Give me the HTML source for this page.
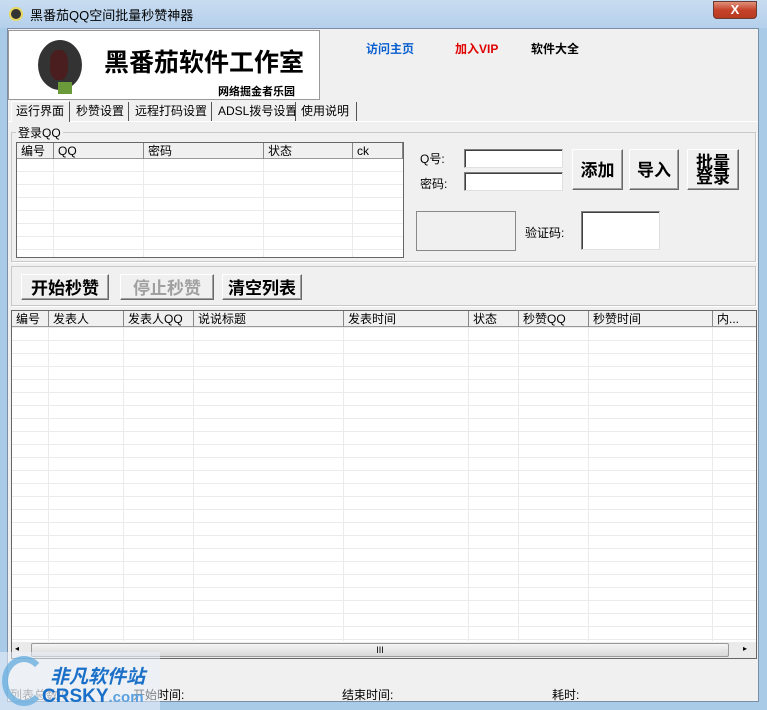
<!DOCTYPE html><html><head><meta charset="utf-8"><style>
*{margin:0;padding:0;box-sizing:border-box}
body{width:767px;height:710px;overflow:hidden;background:#a9cbe8;font-family:"Liberation Sans","Noto Sans CJK SC",sans-serif;font-size:12px;color:#000;position:relative}
.a{position:absolute}
.title{left:0;top:0;width:767px;height:28px;background:linear-gradient(#c8dcf0,#b5d0ec);}
.client{left:7px;top:28px;width:752px;height:674px;background:#f0f0f0;border:1px solid #7a8ea8}
.btn{position:absolute;background:#f0f0f0;border:1px solid;border-color:#fff #6a6a6a #6a6a6a #fff;box-shadow:inset -1px -1px 0 #a0a0a0;font-weight:bold;font-size:17px;text-align:center;font-family:"Noto Sans CJK SC",sans-serif}
.inp{position:absolute;background:#fff;border:1px solid;border-color:#808080 #e0e0e0 #e0e0e0 #808080;box-shadow:inset 1px 1px 0 #404040}
.hd{position:absolute;height:16px;background:#f0f0f0;border-bottom:1px solid #999;}
.hd span{position:absolute;top:0;height:16px;border-right:1px solid #888;padding-left:4px;line-height:16px;font-size:12px;white-space:nowrap;overflow:hidden}
.grid{background-color:#fff;background-image:repeating-linear-gradient(to bottom,transparent 0 12px,#ebebeb 12px 13px)}
.vl{position:absolute;width:1px;background:#ebebeb}
.tab{position:absolute;top:102px;height:19px;line-height:19px;font-size:12px;border-right:1px solid #555;padding-left:4px;white-space:nowrap;overflow:hidden}
</style></head><body>
<div class="a title"></div>
<div class="a" style="left:9px;top:7px;width:14px;height:14px;border-radius:50%;background:#333;border:2px solid #e8d860"></div>
<div class="a" style="left:30px;top:5px;font-size:13px">黑番茄QQ空间批量秒赞神器</div>
<div class="a" style="left:713px;top:1px;width:44px;height:18px;border-radius:0 0 4px 4px;background:linear-gradient(#e0907a,#c5432a 50%,#b83a22);border:1px solid #6b3a30;color:#fff;font-weight:bold;text-align:center;line-height:16px;font-size:13px">X</div>
<div class="a client"></div>
<div class="a" style="left:8px;top:30px;width:312px;height:70px;background:#fff;border:1px solid #999"></div>
<div class="a" style="left:38px;top:40px;width:44px;height:50px;border-radius:50%;background:#333"></div>
<div class="a" style="left:50px;top:50px;width:18px;height:30px;border-radius:40%;background:#4a1e1e"></div>
<div class="a" style="left:58px;top:82px;width:14px;height:12px;background:#6a9a3a"></div>
<div class="a" style="left:104px;top:44px;font-size:25px;font-weight:bold;font-family:'Noto Sans CJK SC',sans-serif;line-height:34px">黑番茄软件工作室</div>
<div class="a" style="left:218px;top:83px;font-size:11px;font-weight:bold">网络掘金者乐园</div>
<div class="a" style="left:366px;top:40px;color:#0a5fd0;font-weight:bold">访问主页</div>
<div class="a" style="left:455px;top:40px;color:#e00000;font-weight:bold">加入VIP</div>
<div class="a" style="left:531px;top:40px;font-weight:bold">软件大全</div>
<div class="a" style="left:8px;top:121px;width:750px;height:1px;background:#fff"></div>
<div class="tab" style="left:11px;top:101px;height:21px;width:59px;background:#f0f0f0;border-left:1px solid #fff;border-top:1px solid #fff">运行界面</div>
<div class="tab" style="left:72px;width:57px">秒赞设置</div>
<div class="tab" style="left:131px;width:81px">远程打码设置</div>
<div class="tab" style="left:214px;width:82px">ADSL拨号设置</div>
<div class="tab" style="left:297px;width:60px">使用说明</div>
<div class="a" style="left:11px;top:132px;width:745px;height:130px;border:1px solid #c8c8c8;box-shadow:1px 1px 0 #fff"></div>
<div class="a" style="left:16px;top:124px;background:#f0f0f0;padding:0 2px">登录QQ</div>
<div class="a grid" style="left:16px;top:142px;width:388px;height:116px;border:1px solid #666;background-position:0 3px"></div>
<div class="vl" style="left:53px;top:158px;height:99px"></div><div class="vl" style="left:143px;top:158px;height:99px"></div><div class="vl" style="left:263px;top:158px;height:99px"></div><div class="vl" style="left:352px;top:158px;height:99px"></div>
<div class="hd" style="left:17px;top:143px;width:386px"><span style="left:0;width:37px">编号</span><span style="left:37px;width:90px">QQ</span><span style="left:127px;width:120px">密码</span><span style="left:247px;width:89px">状态</span><span style="left:336px;width:50px">ck</span></div>
<div class="a" style="left:420px;top:150px">Q号:</div>
<div class="a" style="left:420px;top:175px">密码:</div>
<div class="inp" style="left:464px;top:149px;width:99px;height:19px"></div>
<div class="inp" style="left:464px;top:172px;width:99px;height:19px"></div>
<div class="btn" style="left:572px;top:149px;width:51px;height:41px;line-height:38px">添加</div>
<div class="btn" style="left:629px;top:149px;width:50px;height:41px;line-height:38px">导入</div>
<div class="btn" style="left:687px;top:149px;width:52px;height:41px;line-height:15px;padding-top:3px">批量<br>登录</div>
<div class="a" style="left:416px;top:211px;width:100px;height:40px;border:1px solid #888"></div>
<div class="a" style="left:525px;top:224px">验证码:</div>
<div class="inp" style="left:581px;top:211px;width:79px;height:39px"></div>
<div class="a" style="left:11px;top:266px;width:745px;height:40px;border:1px solid #c8c8c8;box-shadow:1px 1px 0 #fff"></div>
<div class="btn" style="left:21px;top:274px;width:88px;height:26px;line-height:24px">开始秒赞</div>
<div class="btn" style="left:120px;top:274px;width:94px;height:26px;line-height:24px;color:#a0a0a0">停止秒赞</div>
<div class="btn" style="left:222px;top:274px;width:80px;height:26px;line-height:24px">清空列表</div>
<div class="a grid" style="left:11px;top:310px;width:746px;height:349px;border:1px solid #666;background-position:0 4px"></div>
<div class="vl" style="left:48px;top:327px;height:314px"></div><div class="vl" style="left:123px;top:327px;height:314px"></div><div class="vl" style="left:193px;top:327px;height:314px"></div><div class="vl" style="left:343px;top:327px;height:314px"></div><div class="vl" style="left:468px;top:327px;height:314px"></div><div class="vl" style="left:518px;top:327px;height:314px"></div><div class="vl" style="left:588px;top:327px;height:314px"></div><div class="vl" style="left:712px;top:327px;height:314px"></div>
<div class="hd" style="left:12px;top:311px;width:744px"><span style="left:0;width:37px">编号</span><span style="left:37px;width:75px">发表人</span><span style="left:112px;width:70px">发表人QQ</span><span style="left:182px;width:150px">说说标题</span><span style="left:332px;width:125px">发表时间</span><span style="left:457px;width:50px">状态</span><span style="left:507px;width:70px">秒赞QQ</span><span style="left:577px;width:124px">秒赞时间</span><span style="left:701px;width:43px;border:none">内...</span></div>
<div class="a" style="left:12px;top:642px;width:744px;height:16px;background:#eaeaea"></div>
<div class="a" style="left:31px;top:643px;width:698px;height:14px;border:1px solid #999;border-radius:2px;background:linear-gradient(#f4f4f4,#d8d8d8);text-align:center;font-size:9px;line-height:12px">III</div>
<div class="a" style="left:15px;top:644px;font-size:8px">◂</div><div class="a" style="left:743px;top:644px;font-size:8px">▸</div>
<div class="a" style="left:10px;top:686px;color:#666">列表总数:0</div>
<div class="a" style="left:133px;top:686px">开始时间:</div>
<div class="a" style="left:342px;top:686px">结束时间:</div>
<div class="a" style="left:552px;top:686px">耗时:</div>
<div class="a" style="left:0;top:652px;width:160px;height:58px;background:rgba(235,240,248,0.55)"></div>
<div class="a" style="left:2px;top:656px;width:44px;height:50px;border-radius:50%;border:6px solid #6ab0e0;border-right-color:transparent;opacity:.8"></div>
<div class="a" style="left:50px;top:662px;font-size:19px;font-weight:bold;font-style:italic;color:#1a70c8;font-family:'Noto Sans CJK SC',sans-serif">非凡软件站</div>
<div class="a" style="left:42px;top:686px;font-size:19px;font-weight:bold;color:#1a70c8">CRSKY<span style="font-size:15px;color:#5aa0e0">.com</span></div>
</body></html>
